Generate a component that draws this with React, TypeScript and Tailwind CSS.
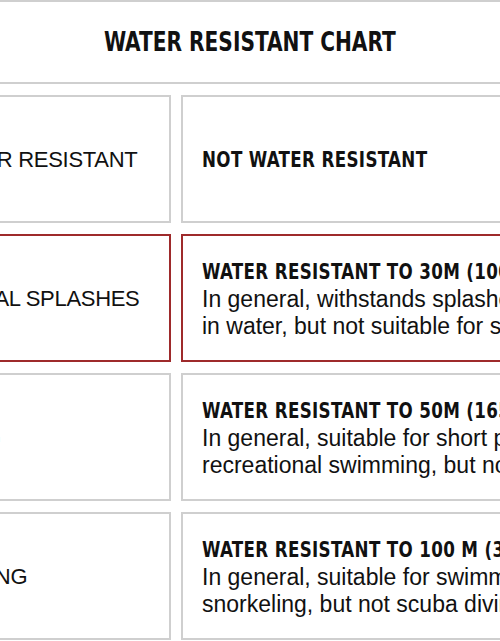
const ROWS = [
  {
    label: "NOT WATER RESISTANT",
    title: "NOT WATER RESISTANT",
    lines: [] as string[],
    highlight: false,
  },
  {
    label: "ACCIDENTAL SPLASHES",
    title: "WATER RESISTANT TO 30M (100 FT)",
    lines: [
      "In general, withstands splashes or brief immersion",
      "in water, but not suitable for swimming.",
    ],
    highlight: true,
  },
  {
    label: "SWIMMING",
    title: "WATER RESISTANT TO 50M (165 FT)",
    lines: [
      "In general, suitable for short periods of",
      "recreational swimming, but not diving.",
    ],
    highlight: false,
  },
  {
    label: "SNORKELING",
    title: "WATER RESISTANT TO 100 M (330 FT)",
    lines: [
      "In general, suitable for swimming and",
      "snorkeling, but not scuba diving.",
    ],
    highlight: false,
  },
];

export default function App() {
  return (
    <div className="h-[641px] w-[500px] overflow-hidden bg-white text-[#111]">
      <div className="ml-[-120px] w-[740px]">
        <div className="flex h-[84px] items-center justify-center border-2 border-[#cfcfcf]">
          <h1 className="scale-x-[0.83] whitespace-nowrap font-['DejaVu_Sans_Condensed',sans-serif] text-[27px] font-bold">
            WATER RESISTANT CHART
          </h1>
        </div>

        <div className="mt-[11px] flex flex-col gap-[11px]">
          {ROWS.map((row) => {
            const border = row.highlight ? "border-[#9e2a2b]" : "border-[#cfcfcf]";
            return (
              <div key={row.label} className="flex gap-[10px]">
                <div
                  className={`flex h-[128px] w-[291px] shrink-0 items-center overflow-hidden border-2 pl-[4px] ${border}`}
                >
                  <span className="whitespace-nowrap font-['Liberation_Sans',sans-serif] text-[22px] tracking-[-0.3px]">
                    {row.label}
                  </span>
                </div>
                <div
                  className={`flex h-[128px] flex-1 flex-col justify-center overflow-hidden border-2 pl-[19px] ${border}`}
                >
                  <p className="origin-left scale-x-[0.845] whitespace-nowrap font-['DejaVu_Sans_Condensed',sans-serif] text-[22px] leading-[29px] font-bold tracking-[0.4px]">
                    {row.title}
                  </p>
                  {row.lines.map((line) => (
                    <p
                      key={line}
                      className="whitespace-nowrap font-['Liberation_Sans',sans-serif] text-[23px] leading-[27px]"
                    >
                      {line}
                    </p>
                  ))}
                </div>
              </div>
            );
          })}
        </div>
      </div>
    </div>
  );
}
